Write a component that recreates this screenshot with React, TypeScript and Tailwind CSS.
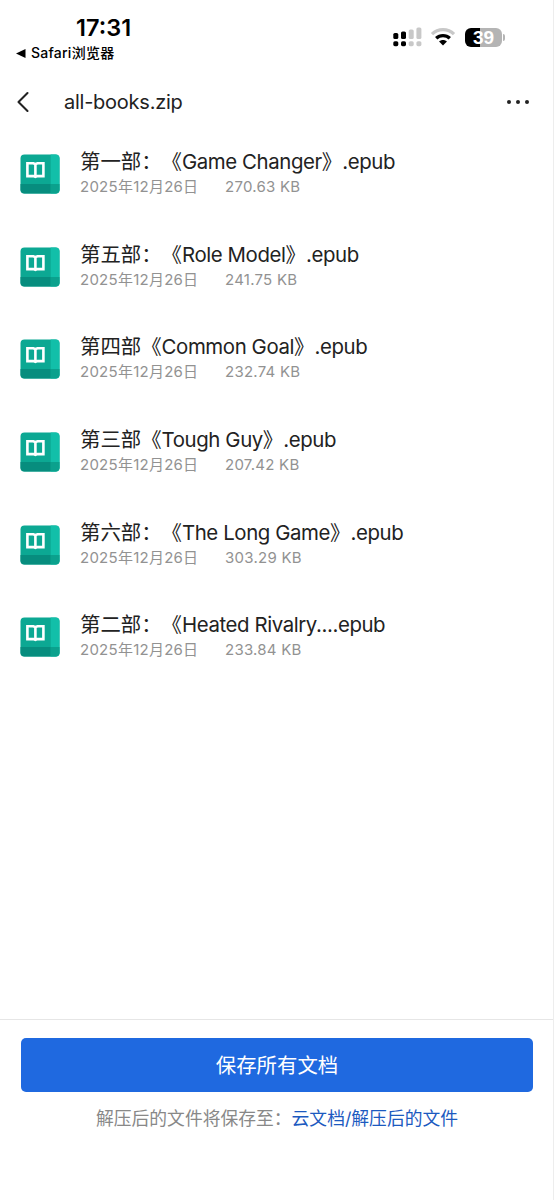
import { ChevronLeft } from "lucide-react";

const files = [
  { name: "第一部：《Game Changer》.epub", date: "2025年12月26日", size: "270.63 KB" },
  { name: "第五部：《Role Model》.epub", date: "2025年12月26日", size: "241.75 KB" },
  { name: "第四部《Common Goal》.epub", date: "2025年12月26日", size: "232.74 KB" },
  { name: "第三部《Tough Guy》.epub", date: "2025年12月26日", size: "207.42 KB" },
  { name: "第六部：《The Long Game》.epub", date: "2025年12月26日", size: "303.29 KB" },
  { name: "第二部：《Heated Rivalry....epub", date: "2025年12月26日", size: "233.84 KB" },
];

function SignalIcon() {
  return (
    <svg className="w-[29px] h-5" viewBox="0 0 29 20">
      <g fill="#000">
        <rect x="0.3" y="6" width="5" height="6" rx="1.6" />
        <rect x="8" y="4.4" width="5" height="7.6" rx="1.6" />
        <rect x="0.3" y="14.2" width="5" height="5" rx="1.6" />
        <rect x="8" y="14.2" width="5" height="5" rx="1.6" />
      </g>
      <g fill="#c8c8c8">
        <rect x="15.7" y="2.4" width="5" height="9.6" rx="1.6" />
        <rect x="23.4" y="0.4" width="5" height="11.6" rx="1.6" />
        <rect x="15.7" y="14.2" width="5" height="5" rx="1.6" />
        <rect x="23.4" y="14.2" width="5" height="5" rx="1.6" />
      </g>
    </svg>
  );
}

function WifiIcon() {
  return (
    <svg className="w-[26px] h-5" viewBox="0 0 26 20" fill="none" strokeWidth="3.3">
      <path d="M2 7.1C8.1 1 17.9 1 24 7.1" stroke="#c8c8c8" />
      <path d="M6.2 11.3C10 7.6 16 7.6 19.8 11.3" stroke="#000" />
      <path d="M9.1 14.6C11.3 12.6 14.7 12.6 16.9 14.6L13 18.5Z" fill="#000" />
    </svg>
  );
}

function BatteryIcon() {
  return (
    <div className="flex items-center gap-px">
      <div className="flex h-[19px] w-[37px] items-center justify-center rounded-[6px] bg-linear-to-r from-black from-40% to-[#b4b4b4] to-40% font-['Liberation_Sans',sans-serif] text-[19px] leading-none font-bold text-white">
        39
      </div>
      <div className="h-[7px] w-[2px] rounded-r-full bg-[#b4b4b4]" />
    </div>
  );
}

function BookIcon() {
  return (
    <svg className="h-10 w-10 shrink-0" viewBox="0 0 40 40">
      <defs>
        <clipPath id="cover">
          <rect x="0.5" y="0.5" width="39" height="39" rx="4" />
        </clipPath>
      </defs>
      <g clipPath="url(#cover)">
        <rect width="40" height="40" fill="#0ca893" />
        <rect x="30.7" width="9.3" height="40" fill="#12bfa9" />
        <rect y="30" width="30.7" height="10" fill="#078d7e" />
        <rect x="30.7" y="30" width="9.3" height="10" fill="#0ba18d" />
      </g>
      <path
        d="M7.4 9.2h6l2 .9 2-.9h6v12.9h-6l-2 .7-2-.7h-6zM15.4 10v13"
        fill="none"
        stroke="#fff"
        strokeWidth="2.6"
      />
    </svg>
  );
}

// Latin runs are set a little tighter than the Chinese around them
function FileName({ name }: { name: string }) {
  return (
    <div className="text-[20.4px] leading-7 text-[#222]">
      {name.split(/([\x20-\x7e]+)/).map((part, i) => (
        <span key={i} className={i % 2 ? "tracking-[-0.4px]" : ""}>
          {part}
        </span>
      ))}
    </div>
  );
}

export default function App() {
  return (
    <main
      lang="zh-CN"
      className="flex h-[1200px] w-[554px] flex-col border-r border-[#ededed] bg-white font-[Inter,'Noto_Sans_CJK_SC',sans-serif] whitespace-nowrap [text-spacing-trim:space-all]"
    >
      <header className="flex h-[72px] items-start justify-between pr-12 pl-4">
        <div className="pt-[14px]">
          <div className="pl-[60px] text-[23.5px] leading-7 font-semibold">17:31</div>
          <div className="flex h-[22px] items-center gap-[5px]">
            <svg className="h-[9px] w-[10px]" viewBox="0 0 10 9">
              <path d="M0 4.5 9.5 0v9z" />
            </svg>
            <span className="text-[14px] leading-none font-medium tracking-[0.25px]">Safari浏览器</span>
          </div>
        </div>
        <div className="flex items-center gap-[9px] pt-[27px]">
          <div className="-mr-px">
            <SignalIcon />
          </div>
          <WifiIcon />
          <BatteryIcon />
        </div>
      </header>

      <nav className="flex h-[60px] items-center text-[#222]">
        <ChevronLeft className="ml-[5px] size-9" strokeWidth={1.4} />
        <h1 className="ml-[23px] text-[20px] leading-7 tracking-[-0.25px]">all-books.zip</h1>
        <div className="mr-6 ml-auto flex gap-[5px]">
          <i className="size-1 rounded-full bg-[#222]" />
          <i className="size-1 rounded-full bg-[#222]" />
          <i className="size-1 rounded-full bg-[#222]" />
        </div>
      </nav>

      <ul className="flex-1 pt-4">
        {files.map((file) => (
          <li key={file.name} className="flex h-[92.7px] items-start gap-5 pl-5">
            <div className="pt-[6px]">
              <BookIcon />
            </div>
            <div>
              <FileName name={file.name} />
              <div className="flex text-[15px] leading-[22px] tracking-[0.25px] text-[#929292]">
                <span className="w-[145px]">{file.date}</span>
                <span>{file.size}</span>
              </div>
            </div>
          </li>
        ))}
      </ul>

      <footer className="flex h-[181px] flex-col items-center border-t border-[#e6e6e6] pt-[18px] pr-5 pl-[21px]">
        <button className="h-[54px] w-full rounded-[5px] bg-[#1f69e0] pt-0.5 text-[20.4px] text-white">保存所有文档</button>
        <p className="mt-[14px] text-[17.8px] leading-[26px] text-[#888]">
          解压后的文件将保存至：<a className="text-[#1c5ac0]">云文档/解压后的文件</a>
        </p>
      </footer>
    </main>
  );
}
